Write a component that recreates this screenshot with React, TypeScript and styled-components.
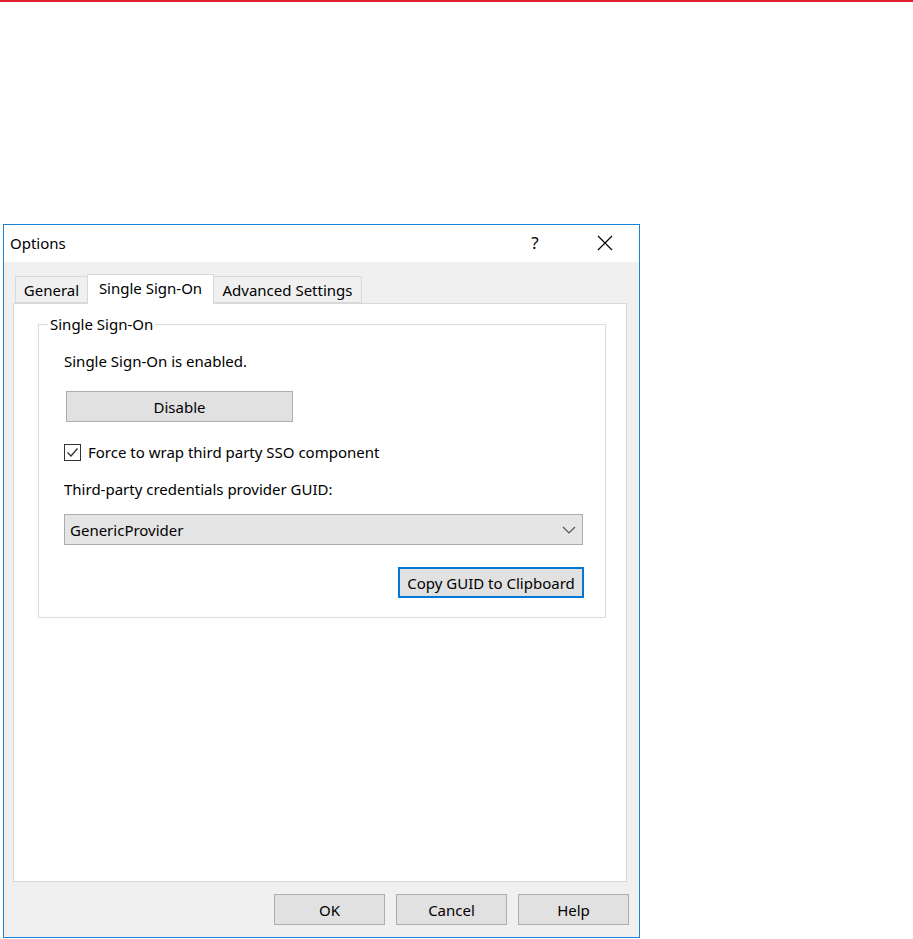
import React from "react";
import styled, { createGlobalStyle } from "styled-components";

const GlobalStyle = createGlobalStyle`
  html, body { margin: 0; padding: 0; background: #ffffff; }
  body {
    font-family: "Noto Sans", "Open Sans", "DejaVu Sans", sans-serif;
    font-size: 14px;
    color: #000;
  }
  * { box-sizing: border-box; }
`;

const Page = styled.div`
  width: 913px;
  height: 939px;
  display: flex;
  flex-direction: column;
`;

const TopRule = styled.div`
  height: 2px;
  background: #e0202e;
`;

const Window = styled.div`
  margin: 222px 0 0 3px;
  width: 637px;
  height: 714px;
  border: 1px solid #1883d7;
  display: flex;
  flex-direction: column;
  background: #f0f0f0;
`;

const TitleBar = styled.div`
  height: 37px;
  background: #ffffff;
  display: flex;
  align-items: center;
  padding-left: 6px;
  padding-bottom: 1px;
`;

const Title = styled.div`
  flex: 1;
  font-size: 15px;
  line-height: 20px;
`;

const HelpGlyph = styled.div`
  width: 20px;
  text-align: center;
  font-size: 17px;
  margin-right: 52px;
  line-height: 20px;
`;

const CloseBtn = styled.div`
  width: 16px;
  height: 16px;
  margin-right: 26px;
  display: flex;
  align-items: center;
  justify-content: center;
`;

const Body = styled.div`
  flex: 1;
  display: flex;
  flex-direction: column;
  padding: 12px 10px 12px 9px;
`;

const TabStrip = styled.div`
  display: flex;
  align-items: flex-end;
  height: 29px;
  padding-left: 2px;
`;

const Tab = styled.div<{ $active?: boolean; $w: number }>`
  width: ${(p) => p.$w}px;
  height: ${(p) => (p.$active ? 30 : 27)}px;
  margin-bottom: ${(p) => (p.$active ? -1 : 0)}px;
  margin-left: ${(p) => (p.$active ? -1 : 0)}px;
  margin-right: ${(p) => (p.$active ? -1 : 0)}px;
  position: relative;
  z-index: ${(p) => (p.$active ? 2 : 1)};
  background: ${(p) => (p.$active ? "#ffffff" : "#f0f0f0")};
  border: 1px solid #d9d9d9;
  border-bottom: ${(p) => (p.$active ? "none" : "1px solid #d9d9d9")};
  display: flex;
  justify-content: center;
  align-items: ${(p) => (p.$active ? "flex-start" : "center")};
  padding-top: ${(p) => (p.$active ? 3 : 1)}px;
  font-size: 15px;
  line-height: 20px;
  white-space: nowrap;
`;

const Panel = styled.div`
  height: 579px;
  margin-right: 2px;
  background: #ffffff;
  border: 1px solid #d9d9d9;
  padding: 10px 20px 0 24px;
`;

const Group = styled.fieldset`
  margin: 0;
  padding: 0;
  border: 1px solid #dcdcdc;
  min-width: 0;
`;

const GroupLabel = styled.legend`
  margin-left: 9px;
  padding: 0 2px;
  font-size: 15px;
  line-height: 20px;
`;

const GroupBody = styled.div`
  padding: 17px 20px 19px 25px;
  display: flex;
  flex-direction: column;
`;

const Label = styled.div<{ $mt?: number }>`
  font-size: 15px;
  line-height: 20px;
  margin-top: ${(p) => p.$mt ?? 0}px;
  white-space: nowrap;
`;

const Button = styled.button<{ $w: number; $default?: boolean; $mt?: number }>`
  width: ${(p) => p.$w}px;
  height: 31px;
  margin-top: ${(p) => p.$mt ?? 0}px;
  background: #e1e1e1;
  border: ${(p) => (p.$default ? "2px solid #0078d7" : "1px solid #adadad")};
  font-family: inherit;
  font-size: 15px;
  color: #000;
  padding: 0;
  line-height: 20px;
  white-space: nowrap;
`;

const DisableButton = styled(Button)`
  margin-left: 2px;
`;

const CheckRow = styled.label`
  display: flex;
  align-items: center;
  margin-top: 20px;
  height: 20px;
  font-size: 15px;
  line-height: 20px;
  white-space: nowrap;
`;

const CheckBox = styled.span`
  width: 17px;
  height: 17px;
  border: 1px solid #333333;
  background: #ffffff;
  display: flex;
  align-items: center;
  justify-content: center;
  margin-right: 7px;
`;

const Select = styled.div`
  margin-top: 15px;
  height: 31px;
  width: 519px;
  background: #e5e5e5;
  border: 1px solid #acacac;
  display: flex;
  align-items: center;
  justify-content: space-between;
  padding: 0 5px 0 5px;
  font-size: 15px;
  line-height: 20px;
`;

const ChevronBox = styled.span`
  width: 16px;
  display: flex;
  justify-content: center;
`;

const RightRow = styled.div`
  display: flex;
  justify-content: flex-end;
  margin-top: 22px;
  padding-right: 1px;
`;

const Footer = styled.div`
  display: flex;
  justify-content: flex-end;
  gap: 11px;
  margin-top: 12px;
`;

export default function App() {
  return (
    <>
      <GlobalStyle />
      <Page>
        <TopRule />
        <Window>
          <TitleBar>
            <Title>Options</Title>
            <HelpGlyph>?</HelpGlyph>
            <CloseBtn>
              <svg width="16" height="16" viewBox="0 0 16 16">
                <path d="M1 1 L15 15 M15 1 L1 15" stroke="#000" strokeWidth="1.2" fill="none" />
              </svg>
            </CloseBtn>
          </TitleBar>
          <Body>
            <TabStrip>
              <Tab $w={73}>General</Tab>
              <Tab $w={127} $active>
                Single Sign-On
              </Tab>
              <Tab $w={149}>Advanced Settings</Tab>
            </TabStrip>
            <Panel>
              <Group>
                <GroupLabel>Single Sign-On</GroupLabel>
                <GroupBody>
                  <Label>Single Sign-On is enabled.</Label>
                  <DisableButton $w={227} $mt={20}>
                    Disable
                  </DisableButton>
                  <CheckRow>
                    <CheckBox>
                      <svg width="15" height="15" viewBox="0 0 15 15">
                        <path d="M2.5 7.5 L6 11 L12.5 3.5" stroke="#333" strokeWidth="1.4" fill="none" />
                      </svg>
                    </CheckBox>
                    Force to wrap third party SSO component
                  </CheckRow>
                  <Label $mt={17}>Third-party credentials provider GUID:</Label>
                  <Select>
                    <span>GenericProvider</span>
                    <ChevronBox>
                      <svg width="14" height="8" viewBox="0 0 14 8">
                        <path d="M1 1 L7 7 L13 1" stroke="#555" strokeWidth="1.2" fill="none" />
                      </svg>
                    </ChevronBox>
                  </Select>
                  <RightRow>
                    <Button $w={186} $default>
                      Copy GUID to Clipboard
                    </Button>
                  </RightRow>
                </GroupBody>
              </Group>
            </Panel>
            <Footer>
              <Button $w={111}>OK</Button>
              <Button $w={111}>Cancel</Button>
              <Button $w={111}>Help</Button>
            </Footer>
          </Body>
        </Window>
      </Page>
    </>
  );
}
